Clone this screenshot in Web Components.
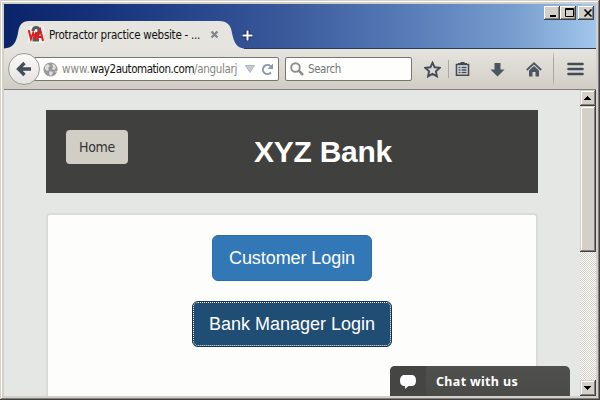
<!DOCTYPE html>
<html lang="en"><head><meta charset="utf-8"><title>XYZ Bank</title>
<style>html,body{margin:0;width:600px;height:400px;overflow:hidden;background:#d4d0c8;font-family:"DejaVu Sans Condensed","DejaVu Sans",sans-serif}</style></head>
<body><browser-window></browser-window>
<script>
const define=(name,html,setup)=>customElements.define(name,class extends HTMLElement{
  connectedCallback(){
    if(this.shadowRoot)return;
    const t=document.createElement('template');
    t.innerHTML='<style>:host,*{box-sizing:border-box}svg{display:block;flex:none}</style>'+html;
    this.attachShadow({mode:'open'}).append(t.content.cloneNode(true));
    if(setup)setup(this);
  }
});

/* A single line of text, tracked so that it fills the given width. */
define('fit-text','<style>:host{display:inline-block;white-space:pre;flex:none}</style><span><slot></slot></span>',el=>{
  const span=el.shadowRoot.querySelector('span'),w=+el.getAttribute('w');
  const d=(w-span.getBoundingClientRect().width)/el.textContent.length;
  span.style.letterSpacing=d.toFixed(3)+'px';
  el.style.width=w+'px';
});

define('caption-button',`<style>
:host{display:flex;width:16px;height:14px;background:#d4d0c8;box-shadow:inset -1px -1px #404040,inset 1px 1px #fff,inset -2px -2px #808080}
</style><slot></slot>`);

define('title-bar',`<style>
:host{display:flex;height:45px;background:linear-gradient(to top,#2a3a55 0 1px,transparent 1px),linear-gradient(90deg,#0a246a 0%,#14317a 15%,#3a5a9c 48%,#5a7fba 70%,#779dce 86%,#a2c6ec 100%);align-items:flex-start}
.tab{position:relative;display:flex;align-items:center;width:240px;height:29px;margin-top:16px;padding-left:24px;flex:none;font-size:11.5px;color:#111}
.shape{position:absolute;left:0;top:0}
.tab>:not(.shape){position:relative}
fit-text{margin-left:5px}
.x{margin-left:10px}.plus{margin:25px 0 0 -3px}
.win{display:flex;margin:2px 2px 0 auto}.win :last-child{margin-left:2px}
</style>
<div class="tab">
<svg class="shape" width="240" height="30"><path d="M0 30V28.5C9 28 12 23 14 13C15 5 18 1 25 1H215C223 1 227 5 228 13C230 23 233 28 240 28.5V30Z" fill="#e6e4df"/></svg>
<svg width="16" height="17" viewBox="0 0 16 17"><path fill="#f3f1ee" d="M0 0h16v17H0z"/><path d="M5 5Q5 1.6 8 1.6T11 4.5Q11 7 6 12.5V14h5" fill="none" stroke="#555b60" stroke-width="3"/><path d="M.7 4L3 13L5.2 7L7.2 12.5L8.2 6M8.8 14L12.3 4L15 15M10 11h4" fill="none" stroke="#e01c1e" stroke-width="2"/></svg>
<fit-text w="151">Protractor practice website - ...</fit-text>
<svg class="x" width="9" height="9"><path d="M1.5 1.5l6 6m0-6l-6 6" stroke="#83868a" stroke-width="2.3"/></svg>
</div>
<svg class="plus" width="13" height="13"><path d="M6.500 1v11M1 6.500h11" stroke="#192d58" stroke-width="4"/><path d="M6.500 1.500v10M1.500 6.500h10" stroke="#fff" stroke-width="2"/></svg>
<div class="win">
<caption-button><svg width="16" height="14"><path d="M4 9h6v2H4z"/></svg></caption-button>
<caption-button><svg width="16" height="14"><path d="M3.500 2.500h8v8h-8zM3 3.500h9" fill="none" stroke="#000"/></svg></caption-button>
<caption-button><svg width="16" height="14"><path d="M4.500 3.500l7 7m0-7l-7 7" stroke="#000" stroke-width="1.600"/></svg></caption-button>
</div>`);

define('nav-bar',`<style>
:host{display:flex;align-items:center;height:41px;background:linear-gradient(#e6e4df,#dad7d0 60%,#d1cdc5);border-bottom:1px solid #808080;font-size:11.5px;color:#777}
.back{z-index:1;flex:none;margin-left:4px;width:32px;height:32px;border-radius:50%;border:1px solid #9b9a97;background:linear-gradient(#fbfaf8,#e4e3e1);display:flex;align-items:center;justify-content:center}
.field{height:24px;flex:none;background:#fefffd;border:1px solid #77766f;border-radius:2px;display:flex;align-items:center}
.url{width:247px;margin-left:-8px;padding-left:10px}.url fit-text{color:#111;margin:0}.url .g{color:#858585}
.search{width:127px;margin-left:6px;padding-left:4px}
.globe{margin-right:4px}.sep{width:1px;height:18px;background:#aaa8a3;flex:none}
.tall{height:36px;background:linear-gradient(transparent,#aaa8a3 20%,#aaa8a3 80%,transparent)}
</style>
<div class="back"><svg width="16" height="16"><path d="M8.500 2L2.500 8l6 6M3 8h12" fill="none" stroke="#454d56" stroke-width="3.300"/></svg></div>
<div class="field url">
<svg class="globe" width="15" height="15"><circle cx="7.500" cy="7.500" r="7" fill="#999997"/><path d="M2 4l3-2 2 2-2 2 1 2-2 1-2-2zM9 2l3 1 1 3-2 2-2-1 1-2zM7 9l3 1-1 3-2 1-1-3zM12 9h2l-1 2z" fill="#dededb"/></svg>
<fit-text class="g" w="28">www.</fit-text><fit-text w="104">way2automation.com</fit-text><fit-text class="g" w="43">/angularj</fit-text>
<svg style="margin-left:8px" width="10" height="8"><path d="M.5.5h9L5 7.500z" fill="#c6c9cf" stroke="#a6acb5" stroke-width=".8"/></svg>
<svg style="margin-left:6px" width="13" height="13"><path d="M10 9.500A4.600 4.600 0 1 1 9.500 3" fill="none" stroke="#8c99aa" stroke-width="2"/><path d="M12 .5V6H6.500z" fill="#8c99aa"/></svg>
</div>
<div class="field search"><svg width="14" height="14"><circle cx="5.500" cy="5.500" r="4.300" fill="none" stroke="#8e8e8b" stroke-width="1.900"/><path d="M8.700 8.700L13 13" stroke="#8e8e8b" stroke-width="2.500"/></svg><fit-text style="margin-left:4px" w="33">Search</fit-text></div>
<svg style="margin-left:12px" width="17" height="17"><path d="M8.500 1.700L10.600 6.300L15.600 6.900L11.900 10.300L12.900 15.300L8.500 12.800L4.100 15.300L5.100 10.300L1.400 6.900L6.400 6.300Z" fill="none" stroke="#424c59" stroke-width="1.900"/></svg>
<div class="sep" style="margin-left:7px"></div>
<svg style="margin-left:6px" width="15" height="16"><path d="M1.500 3.500h12v10.800h-12z" fill="#e6e4df" stroke="#424c59" stroke-width="1.600"/><path d="M3 4V2h2.500V1h4v1H12v2z" fill="#424c59"/><path d="M3.500 6.500h2m1 0h5M3.500 9h2m1 0h5M3.500 11.500h2m1 0h5" stroke="#424c59" stroke-width="1.300"/></svg>
<svg style="margin-left:20px" width="15" height="15"><path d="M4.500 1h6v6.500h4L7.500 14.500.5 7.500h4z" fill="#4c5562"/></svg>
<svg style="margin-left:21px" width="16" height="15"><path d="M.8 8L8 1.300L15.200 8" fill="none" stroke="#4c5562" stroke-width="1.800"/><path d="M3 8.500L8 4l5 4.500V14.500H9.500V10h-3v4.500H3z" fill="#4c5562"/></svg>
<div class="sep tall" style="margin-left:11px"></div>
<svg style="margin-left:13px" width="17" height="14"><path d="M1.500 2h14m-14 5h14m-14 5h14" stroke="#424c59" stroke-width="2.600" stroke-linecap="round"/></svg>`);

define('scroll-bar',`<style>
:host{display:flex;flex-direction:column;width:16px;background:repeating-conic-gradient(#fff 0 25%,#d4d0c8 0 50%) 0 0/2px 2px}
div{flex:none;background:#d4d0c8;box-shadow:inset -1px -1px #404040,inset 1px 1px #d4d0c8,inset -2px -2px #808080,inset 2px 2px #fff}
.b{height:16px}.thumb{height:146px}.down{margin-top:auto}
</style><div class="b"><svg width="16" height="16"><path d="M4 10h7v-1h-1v-1h-1v-1H8V6H7v1H6v1H5v1H4z"/></svg></div><div class="thumb"></div><div class="b down"><svg width="16" height="16"><path d="M4 6h7v1h-1v1H9v1H8v1H7V9H6V8H5V7H4z"/></svg></div>`);

define('bank-button',`<style>
:host{display:flex;align-items:center;justify-content:center;width:160px;height:46px;border-radius:6px;border:1px solid #2e6da4;background:#3277b6;color:#fff;font:18px "Liberation Sans",Arial,sans-serif}
:host([active]){width:200px;background:#204d74;border-color:#17324b;outline:1px dotted #fff;outline-offset:-2px}
</style><slot></slot>`);

define('bank-page',`<style>
:host{display:flex;flex-direction:column;flex:1;min-width:0;padding:20px 42px 0;background:#e5e7e5;overflow:hidden}
header{height:83px;flex:none;background:#40413e;display:grid;grid-template-columns:62px 1fr;padding:20px 20px 0;align-items:start}
.home{height:34px;border-radius:4px;background:#d1cec6;color:#333;font-size:14px;display:flex;align-items:center;justify-content:center}
h1{margin:4px 0 0 126px;font:bold 30px/36px "Liberation Sans",Arial,sans-serif;color:#fff}
main{flex:1;margin-top:20px;background:#fdfefc;border:2px solid #dbdcda;border-bottom:0;border-radius:4px 4px 0 0;padding-top:20px;display:flex;flex-direction:column;align-items:center;gap:20px}
</style>
<header><div class="home"><fit-text w="36">Home</fit-text></div><h1><fit-text w="138">XYZ Bank</fit-text></h1></header>
<main><bank-button><fit-text w="126">Customer Login</fit-text></bank-button><bank-button active><fit-text w="166">Bank Manager Login</fit-text></bank-button></main>`);

define('chat-tab',`<style>
:host{display:flex;width:180px;height:30px;border-radius:5px 5px 0 0;background:linear-gradient(#50514e,#4a4b48);overflow:hidden;color:#fff;font:bold 12.5px "Noto Sans",sans-serif;align-items:center}
.i{width:36px;height:30px;background:#454643;padding:8px 0 0 9px;margin-right:10px}
</style><div class="i"><svg width="18" height="16"><path d="M4.500 1h8Q17 1 17 6.500T12.500 12H9.500L6 15V12H4.500Q1 11 1 6.500T4.500 1z" fill="#fff"/></svg></div><fit-text w="82">Chat with us</fit-text>`);

define('browser-window',`<style>
:host{display:flex;flex-direction:column;width:600px;height:400px;padding:4px;background:#d4d0c8;box-shadow:inset -1px -1px #404040,inset 1px 1px #d4d0c8,inset -2px -2px #808080,inset 2px 2px #fff}
.view{display:flex;flex:1;min-height:0;position:relative}
chat-tab{position:absolute;left:386px;bottom:0}
</style><title-bar></title-bar><nav-bar></nav-bar><div class="view"><bank-page></bank-page><scroll-bar></scroll-bar><chat-tab></chat-tab></div>`);
</script></body></html>
